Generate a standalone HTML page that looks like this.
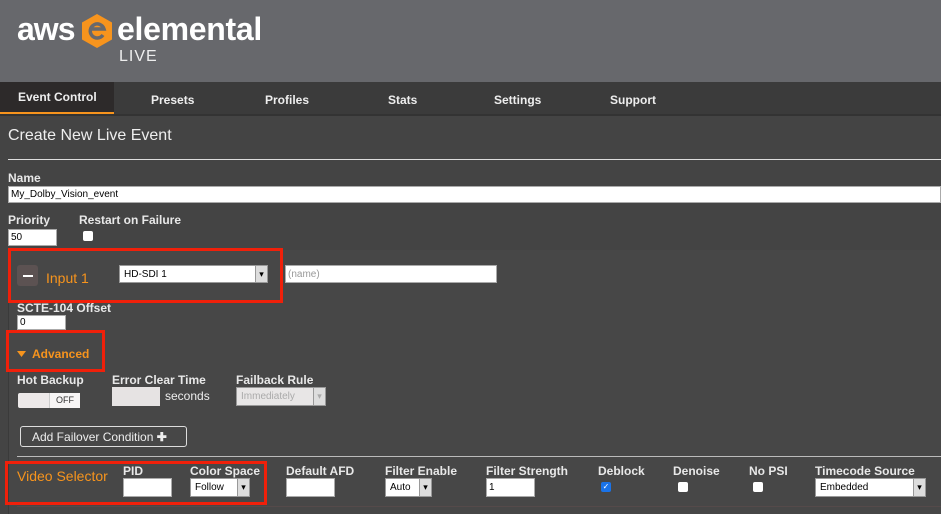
<!DOCTYPE html>
<html><head><style>
*{box-sizing:border-box;margin:0;padding:0}
body{width:941px;height:514px;overflow:hidden;background:#444;font-family:"Liberation Sans",sans-serif;color:#eee;position:relative}
.a{position:absolute}
.l{position:absolute;font-size:12px;font-weight:bold;color:#e8e8e8}
.in{position:absolute;background:#fff;border:1px solid #aaa;font-size:10px;color:#000;padding:3px 2px}
.sel{position:absolute;background:#fff;border:1px solid #999;font-size:10px;color:#000;padding:3px 4px}
.sel::after{content:"▾";position:absolute;right:0;top:0;bottom:0;width:11px;background:#ddd;border-left:1px solid #999;font-size:9px;text-align:center;line-height:16px}
.red{position:absolute;border:3px solid #f0200a}
.cb{position:absolute;width:10px;height:10px;background:#fff;border-radius:2px}
.nav{position:absolute;top:90px;font-size:12px;font-weight:bold;color:#eee}
.or{color:#f7941d}
</style></head><body>
<div class="a" style="left:0;top:0;width:941px;height:82px;background:#67686c"></div>
<div class="a" style="left:17px;top:11px;font-size:32px;font-weight:bold;color:#fff;letter-spacing:-1px">aws</div>
<svg class="a" style="left:80px;top:13px" width="34" height="36" viewBox="0 0 34 36"><polygon points="17,1 32,9.5 32,26.5 17,35 2,26.5 2,9.5" fill="#f7941d"/><path d="M23,22 A7,7 0 1 1 24,16 L11,16" fill="none" stroke="#67686c" stroke-width="3.5"/></svg>
<div class="a" style="left:117px;top:11px;font-size:32px;font-weight:bold;color:#fff;letter-spacing:-0.3px">elemental</div>
<div class="a" style="left:119px;top:48px;font-size:16px;color:#eee;letter-spacing:1px">LIVE</div>
<div class="a" style="left:0;top:82px;width:941px;height:32px;background:#3b3b3b"></div>
<div class="a" style="left:0;top:82px;width:114px;height:32px;background:#2d2a2a;border-bottom:2px solid #f7941d"></div>
<div class="nav" style="left:18px">Event Control</div>
<div class="nav" style="left:151px;top:93px">Presets</div>
<div class="nav" style="left:265px;top:93px">Profiles</div>
<div class="nav" style="left:388px;top:93px">Stats</div>
<div class="nav" style="left:494px;top:93px">Settings</div>
<div class="nav" style="left:610px;top:93px">Support</div>
<div class="a" style="left:0;top:114px;width:941px;height:2px;background:#333"></div>
<div class="a" style="left:8px;top:127px;font-size:16px;color:#eee">Create New Live Event</div>
<div class="a" style="left:8px;top:159px;width:933px;height:1px;background:#ddd"></div>
<div class="l" style="left:8px;top:171px">Name</div>
<div class="in" style="left:8px;top:186px;width:933px;height:17px;padding:2px 2px">My_Dolby_Vision_event</div>
<div class="l" style="left:8px;top:213px">Priority</div>
<div class="l" style="left:79px;top:213px">Restart on Failure</div>
<div class="in" style="left:8px;top:229px;width:49px;height:17px;padding:2px 2px">50</div>
<div class="cb" style="left:83px;top:231px"></div>
<div class="a" style="left:8px;top:250px;width:933px;height:264px;background:#474747;border-left:1px solid #3a3a3a"></div>
<div class="a" style="left:17px;top:265px;width:21px;height:21px;background:#5c5252;border-radius:3px"></div>
<div class="a" style="left:23px;top:275px;width:10px;height:2px;background:#fff"></div>
<div class="a or" style="left:46px;top:270px;font-size:14px">Input 1</div>
<div class="sel" style="left:119px;top:265px;width:149px;height:18px">HD-SDI 1</div>
<div class="in" style="left:285px;top:265px;width:212px;height:18px;color:#999">(name)</div>
<div class="red" style="left:8px;top:248px;width:275px;height:55px"></div>
<div class="l" style="left:17px;top:301px">SCTE-104 Offset</div>
<div class="in" style="left:17px;top:315px;width:49px;height:15px;padding:1px 2px">0</div>
<div class="red" style="left:6px;top:330px;width:99px;height:42px"></div>
<svg class="a" style="left:17px;top:351px" width="9" height="6"><polygon points="0,0 9,0 4.5,6" fill="#f7941d"/></svg>
<div class="a or" style="left:32px;top:347px;font-size:12px;font-weight:bold">Advanced</div>
<div class="l" style="left:17px;top:373px">Hot Backup</div>
<div class="l" style="left:112px;top:373px">Error Clear Time</div>
<div class="l" style="left:236px;top:373px">Failback Rule</div>
<div class="a" style="left:18px;top:393px;width:62px;height:15px;background:#ede9e9;border-radius:2px"></div>
<div class="a" style="left:49px;top:393px;width:31px;height:15px;background:#f7f5f5;border-left:1px solid #ccc;font-size:9px;color:#333;text-align:center;line-height:15px">OFF</div>
<div class="a" style="left:112px;top:387px;width:48px;height:19px;background:#e6e3e3"></div>
<div class="a" style="left:165px;top:389px;font-size:12px;color:#eee">seconds</div>
<div class="sel" style="left:236px;top:387px;width:90px;height:19px;background:#e8e6e6;color:#aaa">Immediately</div>
<div class="a" style="left:20px;top:426px;width:167px;height:21px;border:1px solid #ddd;border-radius:3px;font-size:12px;color:#eee;padding:3px 11px">Add Failover Condition <b>✚</b></div>
<div class="a" style="left:17px;top:456px;width:924px;height:1px;background:#bbb"></div>
<div class="red" style="left:5px;top:461px;width:262px;height:44px"></div>
<div class="a or" style="left:17px;top:468px;font-size:14px">Video Selector</div>
<div class="l" style="left:123px;top:464px">PID</div>
<div class="in" style="left:123px;top:478px;width:49px;height:19px"></div>
<div class="l" style="left:190px;top:464px">Color Space</div>
<div class="sel" style="left:190px;top:478px;width:60px;height:19px">Follow</div>
<div class="l" style="left:286px;top:464px">Default AFD</div>
<div class="in" style="left:286px;top:478px;width:49px;height:19px"></div>
<div class="l" style="left:385px;top:464px">Filter Enable</div>
<div class="sel" style="left:385px;top:478px;width:47px;height:19px">Auto</div>
<div class="l" style="left:486px;top:464px">Filter Strength</div>
<div class="in" style="left:486px;top:478px;width:49px;height:19px">1</div>
<div class="l" style="left:598px;top:464px">Deblock</div>
<div class="cb" style="left:601px;top:482px;background:#1a73e8;color:#fff;font-size:8px;line-height:10px;text-align:center">✓</div>
<div class="l" style="left:673px;top:464px">Denoise</div>
<div class="cb" style="left:678px;top:482px"></div>
<div class="l" style="left:749px;top:464px">No PSI</div>
<div class="cb" style="left:753px;top:482px"></div>
<div class="l" style="left:815px;top:464px">Timecode Source</div>
<div class="sel" style="left:815px;top:478px;width:111px;height:19px">Embedded</div>
<div class="a" style="left:17px;top:506px;width:924px;height:1px;background:#554a4a"></div>
</body></html>
